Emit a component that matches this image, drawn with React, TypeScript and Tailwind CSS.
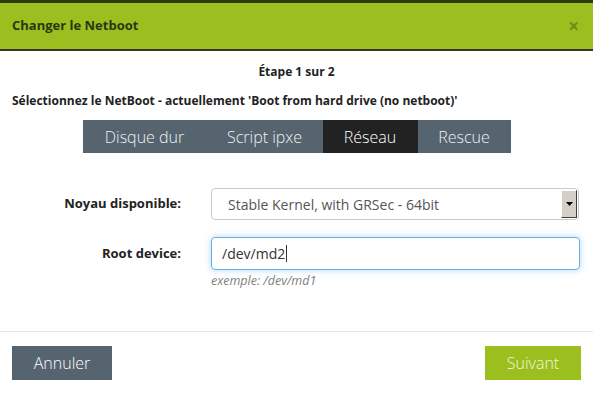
import React from 'react';

const tabs = [
  { label: 'Disque dur', w: 'w-[124px]' },
  { label: 'Script ipxe', w: 'w-[116px]' },
  { label: 'Réseau', w: 'w-[95px]' },
  { label: 'Rescue', w: 'w-[93px]' },
];

const NetbootModal: React.FC = () => {
  const active = 'Réseau';

  return (
    <div
      className="w-[593px] h-[394px] bg-white overflow-hidden flex flex-col"
      style={{ fontFamily: '"Open Sans", "Liberation Sans", sans-serif' }}
    >
      {/* bandeau du haut */}
      <div className="h-[3px] bg-[#2e3a10]" />
      <div className="h-[48px] bg-[#9bbf1f] border-b-2 border-[#333b22] flex items-center justify-between pl-3 pr-[14px]">
        <h3 className="text-[13px] font-bold text-[#2b3611]">Changer le Netboot</h3>
        <span className="text-[19px] font-bold text-[#6f8d17] leading-none">×</span>
      </div>

      {/* contenu */}
      <div className="flex-1 flex flex-col px-3">
        <p className="mt-[12px] text-center text-[12px] font-bold text-[#222] leading-[18px]">Étape 1 sur 2</p>
        <p className="mt-[11px] text-[12px] font-bold text-[#222] leading-[18px]">
          Sélectionnez le NetBoot - actuellement 'Boot from hard drive (no netboot)'
        </p>

        <div className="mt-[10px] flex justify-center">
          <div className="flex bg-[#56646f] ml-[-12px] mr-[-12px]">
            {tabs.map((t) => (
              <div
                key={t.label}
                className={`${t.w} h-[33px] flex items-center justify-center text-[16px] font-light ${
                  t.label === active ? 'bg-[#222222] text-white' : 'text-[#f0f0f0]'
                }`}
              >
                {t.label}
              </div>
            ))}
          </div>
        </div>

        <div className="mt-[35px] flex items-center">
          <label className="w-[169px] text-right text-[13px] font-bold text-[#222]">Noyau disponible:</label>
          <div className="ml-[30px] w-[368px] h-[32px] border border-[#cccccc] rounded-[4px] flex items-stretch">
            <div className="flex-1 flex items-center pl-4 text-[14px] text-[#555]">Stable Kernel, with GRSec - 64bit</div>
            <div className="w-[16px] my-[1px] mr-[1px] bg-[#d4d0c8] border border-t-white border-l-white border-r-[#404040] border-b-[#404040] flex items-center justify-center">
              <svg width="7" height="4" viewBox="0 0 7 4">
                <path d="M0 0h7L3.5 4z" fill="#000" />
              </svg>
            </div>
          </div>
        </div>

        <div className="mt-[17px] flex items-center">
          <label className="w-[169px] text-right text-[13px] font-bold text-[#222]">Root device:</label>
          <div className="ml-[30px] w-[369px] h-[33px] border border-[#66afe9] rounded-[4px] shadow-[0_0_6px_rgba(102,175,233,0.5)] flex items-center pl-[10px] text-[14px] text-[#333]">
            /dev/md2<span className="w-px h-[17px] bg-[#333] ml-px" />
          </div>
        </div>
        <p className="ml-[199px] mt-[3px] text-[12.5px] italic text-[#808080] leading-[16px]">exemple: /dev/md1</p>
      </div>

      {/* pied */}
      <div className="border-t border-[#e5e5e5] h-[63px] px-3 flex items-start justify-between pt-[14px]">
        <button className="w-[100px] h-[34px] bg-[#56646f] text-white text-[16px] font-light">Annuler</button>
        <button className="w-[96px] h-[34px] bg-[#9bbf1f] text-[#f4f8dc] text-[16px] font-light">Suivant</button>
      </div>
    </div>
  );
};

export default function App() {
  return <NetbootModal />;
}
